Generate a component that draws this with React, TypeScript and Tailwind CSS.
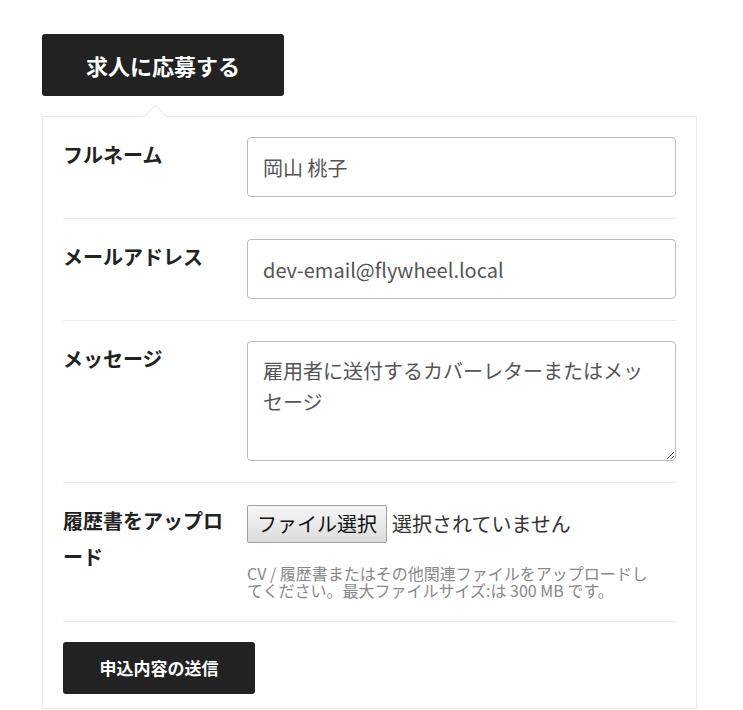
import type { ReactNode } from "react";

const FONT = { fontFamily: '"Noto Sans CJK JP", "Noto Sans", sans-serif' };

function Row({ label, children }: { label: ReactNode; children: ReactNode }) {
  return (
    <div className="flex items-start pt-[20px] pb-[21px] border-b border-[#ececec]">
      <label className="w-[184px] shrink-0 pr-[14px] text-[20px] leading-[36px] font-bold text-[#222]">{label}</label>
      <div className="flex-1 min-w-0">{children}</div>
    </div>
  );
}

export default function App() {
  return (
    <div className="min-h-[710px] bg-white pt-[34px] pl-[42px]" style={FONT}>
      <button className="w-[242px] h-[62px] rounded-[3px] bg-[#222] text-white text-[22px] font-bold leading-none">
        求人に応募する
      </button>

      <div className="relative mt-[20px] w-[655px] border border-[#e8e8e8] bg-white px-[20px]">
        <div className="absolute -top-[9px] left-[104px] w-[17px] h-[17px] rotate-45 bg-white border-l border-t border-[#e8e8e8]" />

        <Row label="フルネーム">
          <input
            defaultValue="岡山 桃子"
            className="block w-full h-[60px] rounded-[4px] border border-[#bbb] px-[15px] text-[20px] text-[#555] outline-none"
            style={FONT}
          />
        </Row>

        <Row label="メールアドレス">
          <input
            defaultValue="dev-email@flywheel.local"
            className="block w-full h-[60px] rounded-[4px] border border-[#bbb] px-[15px] text-[20px] text-[#555] outline-none"
            style={FONT}
          />
        </Row>

        <Row label="メッセージ">
          <textarea
            defaultValue="雇用者に送付するカバーレターまたはメッセージ"
            className="block w-full h-[120px] rounded-[4px] border border-[#bbb] px-[15px] py-[13px] text-[20px] leading-[31px] text-[#555] outline-none"
            style={FONT}
          />
        </Row>

        <Row label="履歴書をアップロード">
          <div className="flex items-center pt-[2px]">
            <span className="h-[38px] px-[9px] flex items-center rounded-[2px] border border-[#a0a0a0] bg-gradient-to-b from-[#f6f6f6] to-[#dcdcdc] text-[20px] text-[#111]">
              ファイル選択
            </span>
            <span className="ml-[5px] text-[20px] text-[#333]">選択されていません</span>
          </div>
          <p className="mt-[22px] mb-[1px] max-w-[410px] text-[16px] leading-[17px] text-[#888]">
            CV / 履歴書またはその他関連ファイルをアップロードしてください。最大ファイルサイズ:は 300 MB です。
          </p>
        </Row>

        <div className="pt-[20px] pb-[14px]">
          <button className="w-[192px] h-[52px] rounded-[3px] bg-[#222] text-white text-[17px] font-bold">
            申込内容の送信
          </button>
        </div>
      </div>
    </div>
  );
}
